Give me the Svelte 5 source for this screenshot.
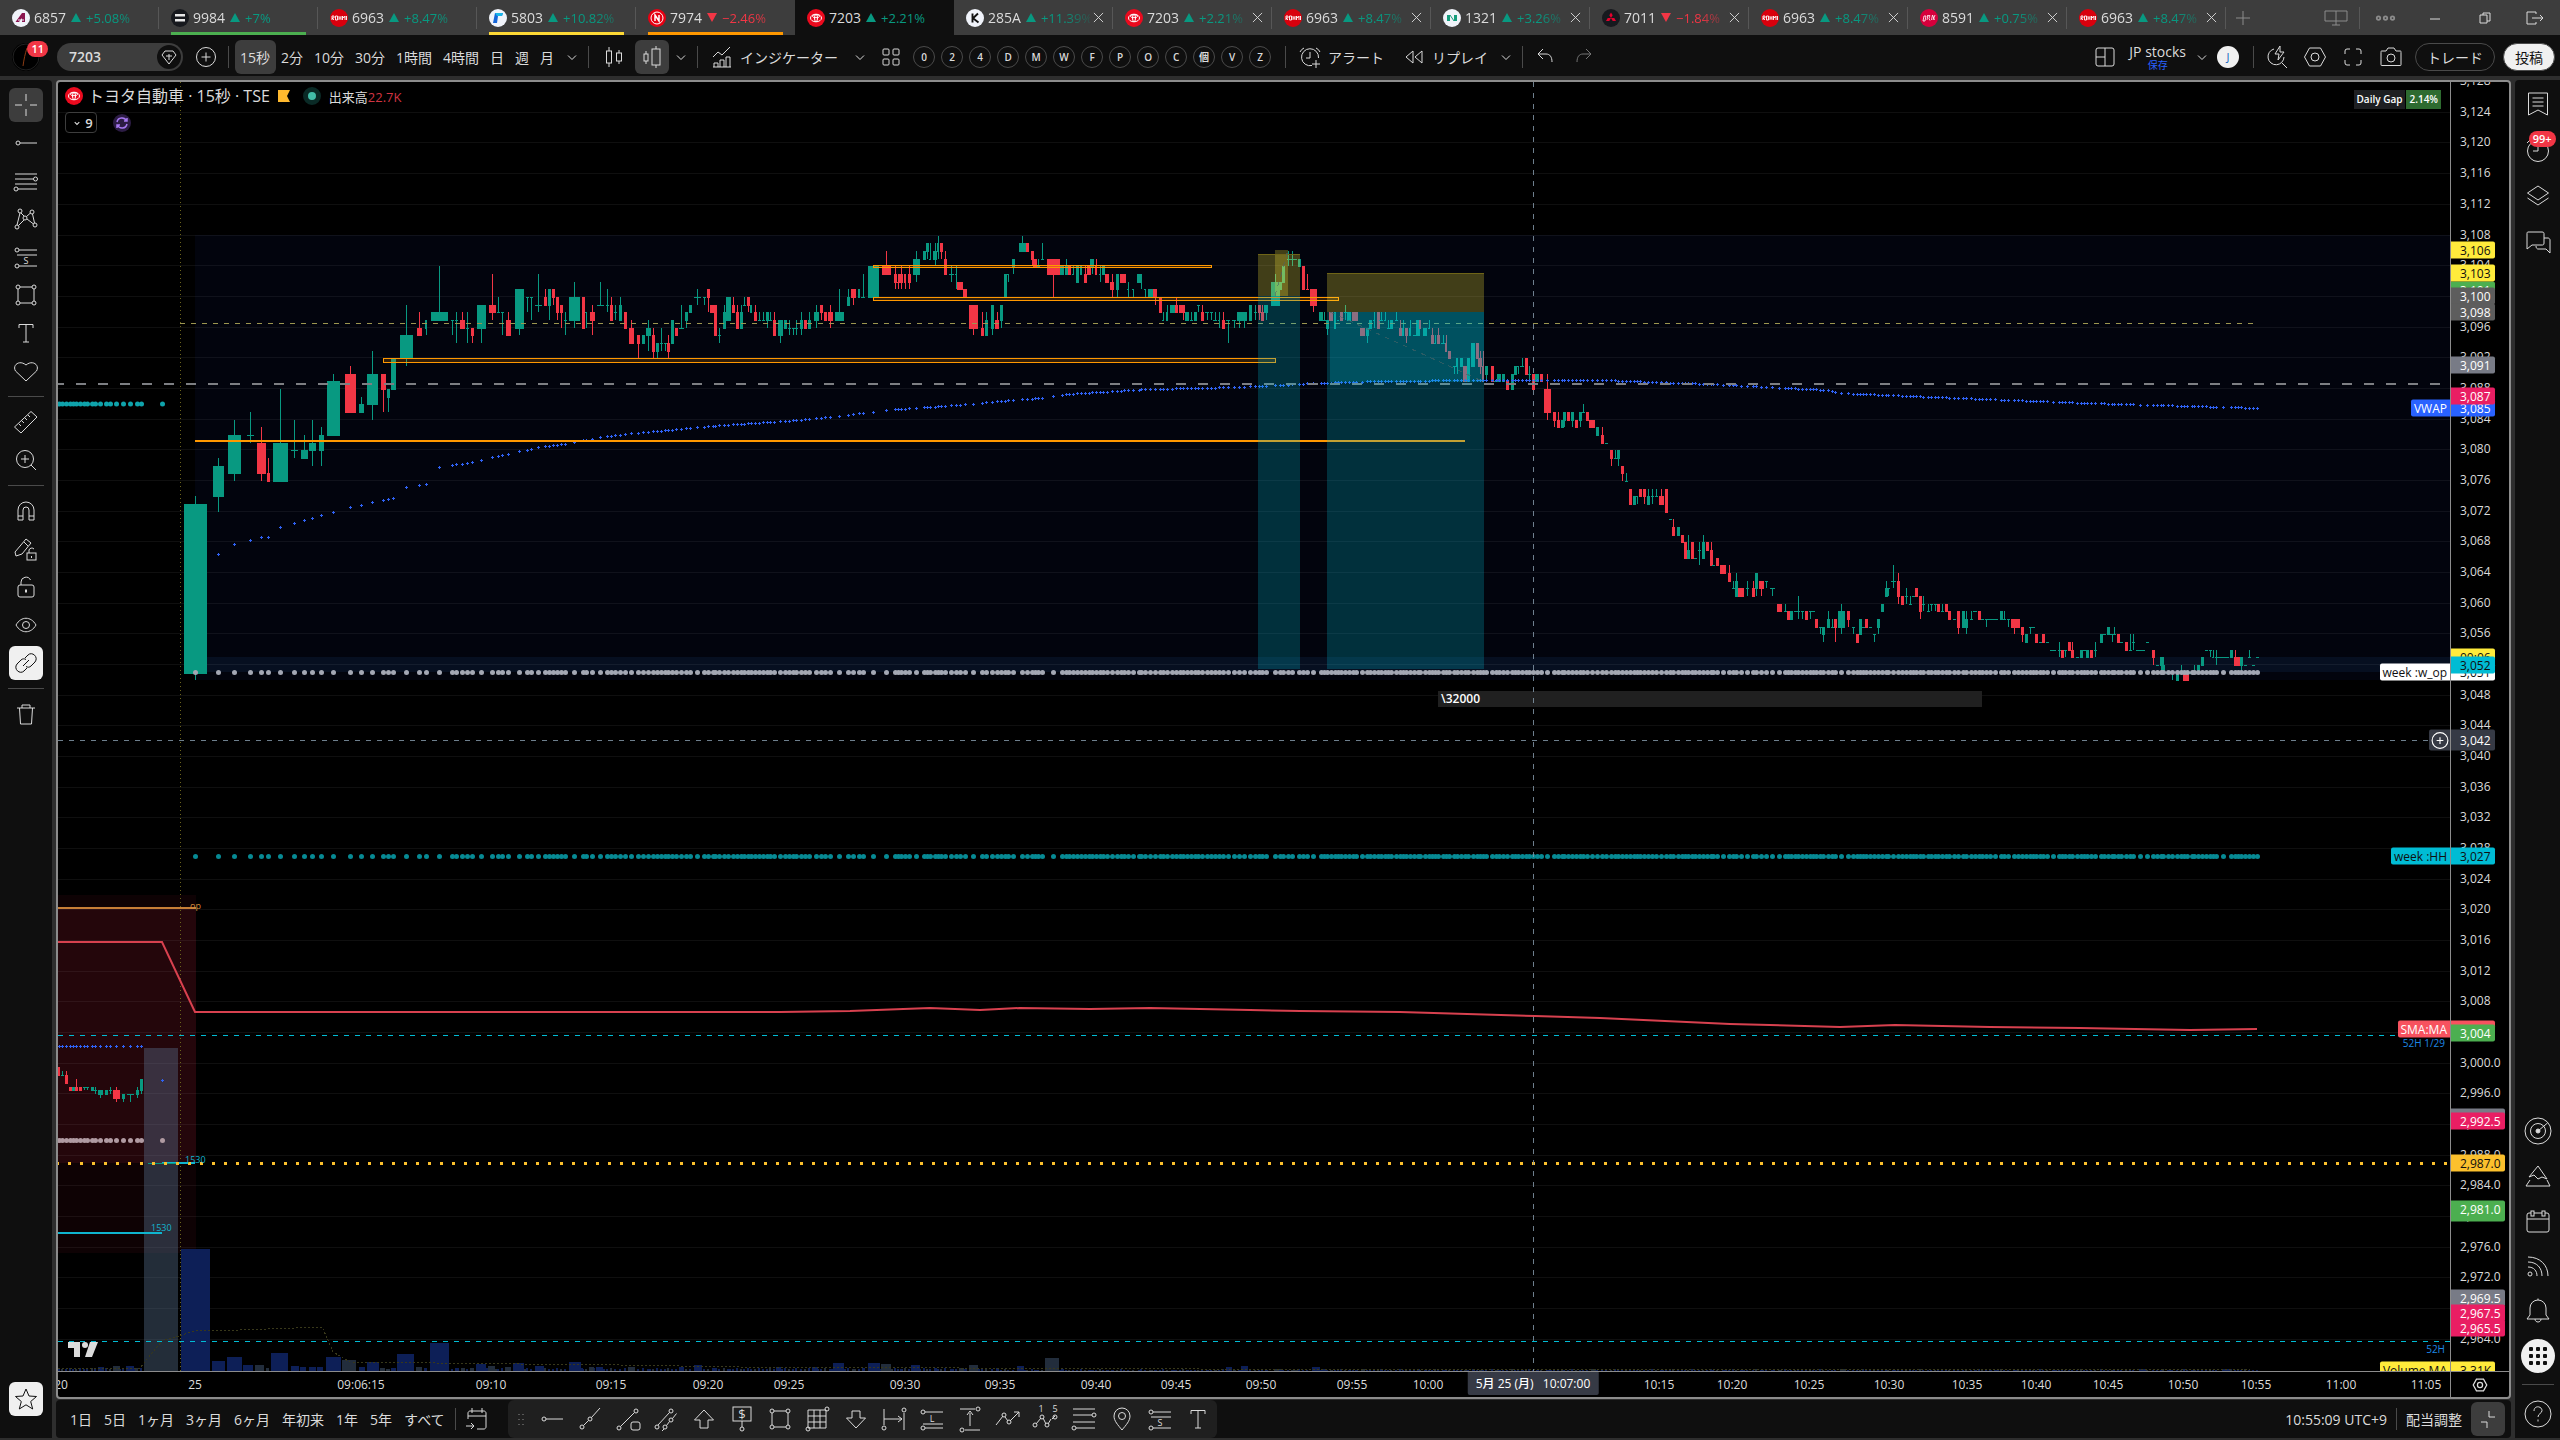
<script lang="ts">
  type Tab = { code: string; pct: string; logo: string; down?: boolean; mark?: string; active?: boolean; closable?: boolean };

  const tabs: Tab[] = [
    { code: '6857', pct: '+5.08%', logo: 'advantest' },
    { code: '9984', pct: '+7%', logo: 'softbank', mark: '#4caf50' },
    { code: '6963', pct: '+8.47%', logo: 'rohm' },
    { code: '5803', pct: '+10.82%', logo: 'fujikura', mark: '#fdd835' },
    { code: '7974', pct: '−2.46%', logo: 'nintendo', down: true, mark: '#ff9800' },
    { code: '7203', pct: '+2.21%', logo: 'toyota', active: true },
    { code: '285A', pct: '+11.39%', logo: 'kioxia', closable: true },
    { code: '7203', pct: '+2.21%', logo: 'toyota', closable: true },
    { code: '6963', pct: '+8.47%', logo: 'rohm', closable: true },
    { code: '1321', pct: '+3.26%', logo: 'nomura', closable: true },
    { code: '7011', pct: '−1.84%', logo: 'mitsubishi', down: true, closable: true },
    { code: '6963', pct: '+8.47%', logo: 'rohm', closable: true },
    { code: '8591', pct: '+0.75%', logo: 'orix', closable: true },
    { code: '6963', pct: '+8.47%', logo: 'rohm', closable: true }
  ];

  const logos: Record<string, string> = {
    advantest: '<circle cx="9" cy="9" r="9" fill="#f0f3fa"/><path d="M3.5 13 10 4h3v9h-3V9l-3 4z" fill="#8a1550"/><path d="M6 11h6" stroke="#f0f3fa"/>',
    softbank: '<circle cx="9" cy="9" r="9" fill="#17191e"/><path d="M4 5h10v2.600H4zM4 10h10v2.600H4z" fill="#e8e8e8"/>',
    rohm: '<circle cx="9" cy="9" r="9" fill="#d9000d"/><path d="M2 11V7h2v2H2l2 2M5.500 7h2v4h-2zM9 7v4M9 9h2M11 7v4M12.500 11V7l1.200 2L15 7v4M16.500 7v4" fill="none" stroke="#fff" stroke-width=".9"/>',
    fujikura: '<circle cx="9" cy="9" r="9" fill="#f0f3fa"/><path d="M6 4h8l-1 3H9l-1 7H4z" fill="#1565d8"/><path d="M6 4h8l-1 3H8z" fill="#19b5e8"/>',
    nintendo: '<circle cx="9" cy="9" r="9" fill="#e60012"/><circle cx="9" cy="9" r="6" fill="none" stroke="#fff"/><path d="M7 12V6l4 6V6" fill="none" stroke="#fff" stroke-width="1.500"/>',
    toyota: '<circle cx="9" cy="9" r="9" fill="#eb0a1e"/><g fill="none" stroke="#fff"><ellipse cx="9" cy="9" rx="5.500" ry="3.800"/><ellipse cx="9" cy="7.200" rx="3.600" ry="1.500"/><ellipse cx="9" cy="9" rx="1.500" ry="3.600"/></g>',
    kioxia: '<circle cx="9" cy="9" r="9" fill="#f0f3fa"/><path d="M6.500 4.500v9M12 4.500l-5 4.700 5.500 4.300" fill="none" stroke="#111" stroke-width="1.900"/>',
    nomura: '<circle cx="9" cy="9" r="9" fill="#f0f3fa"/><path d="M4 6h3v6H4zM11 6h3v6h-3z" fill="#149c7c"/><path d="M7 6l4 6" stroke="#149c7c"/>',
    mitsubishi: '<circle cx="9" cy="9" r="9" fill="#17191e"/><path d="M9 3.500l1.700 2.800L9 9 7.300 6.300zM9 9l-1.700 3H4l1.700-3zM9 9l1.700 3H14l-1.700-3z" fill="#e6002d"/>',
    orix: '<circle cx="9" cy="9" r="9" fill="#d6003c"/><path d="M3 12l1-5h2l-1 5zM7 11l1-5M7 7l3-.5-1 3 1 2M11.500 11l1-5M13 11l2-5M12.500 6l2 5" fill="none" stroke="#fff" stroke-width=".8"/>'
  };

  // 28 x 28 outline icons
  const icons: Record<string, string> = {
    cross: '<path d="M14 3v7M14 18v7M3 14h7M18 14h7"/>',
    hline: '<circle cx="6" cy="14" r="2"/><path d="M8 14h17"/>',
    fib: '<path d="M3 7h22M3 12h18.500M3 17h22M6 22h19"/><circle cx="23.500" cy="12" r="2"/><circle cx="4" cy="22" r="2"/>',
    pattern: '<circle cx="5" cy="22" r="2"/><circle cx="8" cy="6" r="2"/><circle cx="13" cy="13" r="2"/><circle cx="20" cy="7" r="2"/><circle cx="23" cy="20" r="2"/><path d="M5 20 8 8M9 8l3 3M6.500 20.500 12 15M14.500 11.500 18.500 8M20.500 9l2 9M15 14l6.500 5"/>',
    longpos: '<circle cx="5" cy="7" r="2"/><path d="M7 7h18M5 12h20M7 23h18"/><circle cx="5" cy="23" r="2"/><text x="14" y="21">S</text>',
    lpos: '<circle cx="5" cy="7" r="2"/><path d="M7 7h18M5 19h20M7 23h18"/><circle cx="5" cy="23" r="2"/><text x="14" y="17">L</text>',
    rect: '<circle cx="6" cy="6" r="2"/><circle cx="22" cy="6" r="2"/><circle cx="6" cy="22" r="2"/><circle cx="22" cy="22" r="2"/><path d="M8 6h12M8 22h12M6 8v12M22 8v12"/>',
    text: '<path d="M7 9V5.500h14V9M14 5.500V23M11 23h6"/>',
    heart: '<path d="M14 24 3.500 14C0 8 7.500 2.500 14 8c6.500-5.500 14 0 10.500 6z"/>',
    ruler: '<path d="M2.500 19 19 3.500l6 5.500L9 25zM7 16l2 2M10 13l2 2M13 10l2 2M16 7l2 2"/>',
    zoom: '<circle cx="13" cy="13" r="8.500"/><path d="M13 9v8M9 13h8M19 19l5 5"/>',
    magnet: '<path d="M6 23V13a8 8 0 0 1 16 0v10h-5V13a3 3 0 0 0-6 0v10zM6 19h5M17 19h5"/>',
    penlock: '<path d="M3 17 14 4l5 4-9 11-6 2zM12 7l4 4"/><rect x="15" y="18" width="9" height="7"/><path d="M17 18v-3a3 3 0 0 1 5-1M19.500 21v2"/>',
    lock: '<rect x="6" y="12" width="16" height="12" rx="2"/><path d="M9 12V9a5 5 0 0 1 9.500-2"/><path d="M14 16.500v3" stroke-width="2"/>',
    eye: '<path d="M4 14c5-9 15-9 20 0-5 9-15 9-20 0z"/><circle cx="14" cy="14" r="3.500"/>',
    link: '<path d="M13 9l3-3c4-4 11 2 7 7l-4 4c-1.500 1.500-3.500 1.500-5 .5M15 19l-3 3c-4 4-11-2-7-7l4-4c1.500-1.500 3.500-1.500 5-.5M11 17l6-6"/>',
    trash: '<path d="M5 8h18M7.500 8l1 16h11l1-16M10 8V5h8v3"/>',
    star: '<path d="M14 4l3 7 7.500.5-5.800 5 2 7.500-6.700-4.200L7.300 24l2-7.500-5.800-5L11 11z"/>',
    candles: '<path d="M9 4v4M9 20v4M19 7v3M19 18v3"/><rect x="6.500" y="8" width="5" height="12"/><rect x="16.500" y="10" width="5" height="8"/>',
    hollow: '<path d="M8 8v3M8 18v3M18 3v3M18 22v3"/><rect x="6" y="11" width="4" height="7"/><rect x="14" y="6" width="8" height="16"/>',
    chev: '<path d="M10 12.500l4 4 4-4"/>',
    indicators: '<path d="M5 14l5-5 4 3 8-8M6 24v-4h4v4M12 24v-7h4v7M18 24V14h4v10M5 24h18"/>',
    grid4: '<rect x="6" y="6" width="6" height="6" rx="1"/><rect x="16" y="6" width="6" height="6" rx="1"/><rect x="6" y="16" width="6" height="6" rx="1"/><rect x="16" y="16" width="6" height="6" rx="1"/>',
    alarm: '<path d="M22.500 15a8.500 8.500 0 1 0-6.500 7.500M14 9v6h-4M4 9a8 8 0 0 1 4-4M24 9a8 8 0 0 0-4-4M20 17v8M16 21h8"/>',
    replay: '<path d="M13 8l-7 6 7 6zM22 8l-7 6 7 6z"/>',
    undo: '<path d="M12 6l-5 5 5 5M7 11h8c4 0 6 3 6 8"/>',
    redo: '<path d="M16 6l5 5-5 5M21 11h-8c-4 0-6 3-6 8"/>',
    layout: '<rect x="5" y="5" width="18" height="18" rx="2"/><path d="M14 5v18M5 14h9"/>',
    quick: '<path d="M11 6a8 8 0 1 0 10 8M19 20l5 5M17 3l-5 8h4l-1 6 6-8h-4z"/>',
    hex: '<path d="M8.500 5h11l5 9-5 9h-11l-5-9z"/><circle cx="14" cy="14" r="4"/>',
    full: '<path d="M6 11V8a2 2 0 0 1 2-2h3M17 6h3a2 2 0 0 1 2 2v3M22 17v3a2 2 0 0 1-2 2h-3M11 22H8a2 2 0 0 1-2-2v-3"/>',
    camera: '<path d="M5 8h4l2-3h6l2 3h4c1 0 1 0 1 1.500V21c0 1.500 0 1.500-1 1.500H5c-1 0-1 0-1-1.500V9.500C4 8 4 8 5 8z"/><circle cx="14" cy="15" r="4"/>',
    plusCircle: '<circle cx="14" cy="14" r="9.500"/><path d="M14 9.500v9M9.500 14h9"/>',
    watch: '<path d="M4.500 3h19v22l-9.500-5-9.500 5zM8.500 8h11M8.500 12h11M8.500 16h11"/>',
    clock: '<circle cx="14" cy="15" r="10.500"/><path d="M14 9v6H9M3 7l4-4"/>',
    layers: '<path d="M14 4l10.500 7L14 18 3.500 11zM3.500 16 14 23l10.500-7"/>',
    chat: '<path d="M4 4h14c2 0 2 1 2 2v9c0 2-1 2-2 2H8l-5 4V6c0-1 0-2 1-2zM20 10h4c1 0 2 1 2 2v13l-4-4h-8c-1 0-2-1-2-3"/>',
    radar: '<circle cx="14" cy="14" r="13"/><circle cx="14" cy="14" r="7.500"/><path d="M14 14l9.500-8"/><circle cx="14" cy="14" r="2" fill="currentColor"/>',
    mountain: '<path d="M14 4 5 15l5-2 4 4 4-2 5 2zM6 18l-4 6h24l-3-6"/>',
    calendar: '<rect x="3" y="6" width="22" height="19" rx="2"/><path d="M3 12h22"/><rect x="7" y="4" width="3" height="5" fill="#0f0f0f"/><rect x="18" y="4" width="3" height="5" fill="#0f0f0f"/>',
    rss: '<circle cx="6" cy="22" r="2"/><path d="M4 15c6 0 9 4 9 9M4 10c9 0 14 6 14 14M4 5c12 0 20 8 20 19"/>',
    bell: '<path d="M3 22l3-4v-7a8 8 0 0 1 16 0v7l3 4zM11 22c0 4 6 4 6 0M14 3V1.500"/>',
    help: '<circle cx="14" cy="14" r="13"/><path d="M10 11c0-6 8-5 8-.5 0 3-4 3-4 6.500"/><path d="M14 19.500v2"/>',
    goto: '<path d="M6 14V8c0-1 1-2 2-2h14c1 0 2 1 2 2v14c0 1-1 2-2 2h-7M6 11h18M10 3v5M20 3v5M4 21h8M9 18l3 3-3 3"/>',
    trend: '<circle cx="6" cy="22" r="2"/><circle cx="14" cy="14" r="2"/><path d="M7.500 20.500l5-5M15.500 12.500 24 3"/>',
    ray: '<circle cx="5" cy="23" r="2"/><circle cx="22" cy="6" r="2"/><path d="M6.500 21.500l14-14"/><rect x="17" y="17" width="9" height="8" rx="2"/>',
    channel: '<circle cx="5" cy="22" r="2"/><circle cx="19" cy="6" r="2"/><circle cx="19" cy="15" r="2"/><circle cx="13" cy="22" r="2"/><path d="M6 20 17.500 7.500M14.500 20.500l3-4M20.500 13.500l4-5M10 26l2-2"/>',
    up: '<path d="M14 5 4.500 15H10v8h8v-8h5.500z"/>',
    down: '<path d="M14 23l9.500-10H18V6h-8v7H4.500z"/>',
    price: '<rect x="5" y="2" width="18" height="14"/><path d="M14 16v6"/><circle cx="14" cy="24" r="2"/><text x="14" y="14" style="font-size:13px">$</text>',
    gridbox: '<path d="M4 5h18v18H4zM10 5v18M16 5v18M4 11h18M4 17h18"/><circle cx="23" cy="4" r="2"/><circle cx="4" cy="24" r="2"/>',
    dateRange: '<path d="M4 4v16M24 8v17M4 14h18M18 11l4 3-4 3"/><circle cx="4" cy="23" r="2"/><circle cx="24" cy="5" r="2"/>',
    priceRange: '<path d="M4 4h15M9 25h15M14 21V8M11 10l3-4 3 4"/><circle cx="22" cy="4" r="2"/><circle cx="6" cy="25" r="2"/>',
    path: '<path d="M2 20l7-9M11 12l3 4M16 16l9-9M20 7h5v5"/><circle cx="10" cy="10" r="2"/><circle cx="15" cy="17" r="2"/>',
    elliott: '<path d="M4 19l5-6M11 13l3 6M16 19l3-5M20 14l3-3"/><circle cx="3" cy="20" r="2"/><circle cx="10" cy="12" r="2"/><circle cx="15" cy="20" r="2"/><circle cx="23" cy="12" r="2"/><text x="9" y="7">1</text><text x="23" y="7">5</text>',
    fib2: '<path d="M3 4h22M3 10h19M3 17h22M6 23h19"/><circle cx="24" cy="10" r="2"/><circle cx="4" cy="23" r="2"/>',
    pin: '<path d="M14 25c-4-5-8-9-8-14a8 8 0 0 1 16 0c0 5-4 9-8 14z"/><circle cx="14" cy="11" r="3.500"/>',
    collapse: '<path d="M15 6v6h6M7 17h6v6"/>'
  };

  const timeframes = ['15秒', '2分', '10分', '30分', '1時間', '4時間', '日', '週', '月'];
  const favorites = ['0', '2', '4', 'D', 'M', 'W', 'F', 'P', 'O', 'C', '個', 'V', 'Z'];
  const leftTools = ['cross', 'hline', 'fib', 'pattern', 'longpos', 'rect', 'text', 'heart', '-', 'ruler', 'zoom', '-', 'magnet', 'penlock', 'lock', 'eye', 'link', '-', 'trash'];
  const rightTop = ['watch', 'clock', 'layers', 'chat'];
  const rightBottom = ['radar', 'mountain', 'calendar', 'rss', 'bell'];
  const drawTools = ['hline', 'trend', 'ray', 'channel', 'up', 'price', 'rect', 'gridbox', 'down', 'dateRange', 'lpos', 'priceRange', 'path', 'elliott', 'fib2', 'pin', 'longpos', 'text'];
  const ranges = ['1日', '5日', '1ヶ月', '3ヶ月', '6ヶ月', '年初来', '1年', '5年', 'すべて'];

  // plot area
  const L = 58;
  const T = 82;
  const W = 2393;
  const H = 1289;
  const y = (price: number) => 235.5 + (3108 - price) * 7.667;
  const topPct = (v: number) => `${((v - T) / H) * 100}%`;
  const leftPct = (v: number) => `${((v - L) / W) * 100}%`;

  // bar: x, width (negative = falling), body top, body bottom, high, low; prices are offsets from 3000
  const segments = [
    {
      start: 0,
      step: 1 / 3,
      bars: `177 -6 -.5 -1.5;187 10 -1.5 -1.5 -1 -1.5;199 -9 -1.5 -2.5 -1 -2.5;209 -9 -3 -3.5;220 9 -3 -3.5;229 -9 -3 -3.5 -2 -3.5;241 -9 -3 -3.5;252 8 -3 -3 -3 -3.5;262 8 -3 -3 -3 -3.5;275 9 -3 -3.5;286 8 -3.5 -3.5 -3 -4;301 15 -3.5 -4 -3.5 -4.5;319 8 -3.5 -4;331 8 -3.5 -3.5 -3 -4;349 -21 -3.5 -4.5 -3 -5;370 9 -4 -4.5 -4 -5;389 20 -4 -4 -4 -5;412 8 -3.5 -4 -3 -4.5;424 9 -2 -3.5 -2 -4`
    },
    {
      start: 170,
      step: 0.408,
      bars: `62 57 73 51 74 50;118 27 78 74 79 72;158 32 82 77 84 76;195 18 82 82 85 81;222 -22 81 77 83 76;241 -7 77 76 79 76;270 37 81 76 88 76;305 18 80 80 84 79;329 17 80 79 82 79;349 17 81 80 84 78;371 12 82 80 83 78;400 31 89 82 90 82;442 -27 90 85 91 85;469 12 86 85 87 85;496 27 90 86 93 84;523 -12 90 88 90 85;535 7 88 87 88 85;547 13 92 88;579 32 95 92 99 91;611 -12 96 95 98 95;628 6 97 96 97 95;660 42 98 97 104 97;692 8 97 97 97 95;702 8 97 97 98 94;716 -13 97 96 98 96;729 8 96 96 98 94;741 -8 96 95 96 94;763 22 99 96 99 94;790 -17 99 98 103 97;805 8 98 98 100 98;814 8 98 98 98 95;829 -12 97 95 98 95;856 22 101 96 101 95;876 8 100 100 100 98;885 8 100 100 100 97;902 17 99 99 103 98;920 -8 100 99 101 99;930 7 101 99 101 97;939 -7 101 100 101 99;949 -7 100 98 100 97;959 -8 99 98 99 96;969 8 97 97 98 95;991 26 100 97 102 96;1013 -8 100 96;1020 6 98 98 98 96;1035 -12 98 97 99 95;1054 17 99 99 102 99;1072 8 99 99 101 98;1081 -7 99 97 100 97;1091 7 98 98 99 97;1103 7 99 97 100 97;1116 -8 98 96;1131 -12 96 94 97 94;1148 -7 95 94 95 92;1160 8 95 94;1172 12 96 95 97 93;1184 -7 95 93 96 92;1194 7 94 93 94 92;1204 7 94 94 96 93;1214 7 94 94 94 93;1221 -7 94 93 95 92;1231 8 97 94;1241 -8 96 95;1253 12 96 96 99 96;1265 7 98 97 98 96;1275 7 99 98;1292 17 100 100 101 99;1309 7 100 100 100 99;1319 -7 101 100 101 98;1331 -15 99 98;1336 -7 99 95;1346 7 95 95 96 94;1358 7 98 96 99 96;1367 12 100 97;1380 -7 99 98 100 98;1390 -7 98 96 99 96;1399 8 98 96 99 96;1408 7 99 99 100 99;1417 -7 100 99 100 98;1424 6 99 98;1434 -7 98 97 99 97;1444 7 97 97 98 97;1454 7 97 97 98 97;1464 8 98 97 98 96;1471 7 97 97 98 97;1481 -7 97 95 98 95;1496 12 97 95 97 94;1508 7 97 96;1518 7 96 96 97 95;1527 7 96 96 96 95;1535 7 96 96 97 95`
    },
    {
      start: 800,
      step: 0.4847,
      bars: `3 7 97 96 98 95;11 -7 97 96;19 6 97 96 98 96;32 10 98 97 99 96;44 -6 99 98 99 97;51 -6 98 97;61 -10 98 97 99 96;81 19 98 97 101 97;98 6 100 99 101 99;110 -10 101 100 101 99;121 5 101 100;131 9 100 100 103 100;151 23 104 100;178 -18 104 103 106 103;195 -7 103 102 104 101;202 -3 102 102 103 101;209 -8 103 102 104 101;217 -5 103 102 103 101;224 -6 103 102 104 101;240 15 105 103 106 102;255 6 106 105;263 6 107 106 107 105;269 3 105 105 107 105;278 8 106 105 107 104;284 5 107 106 108 105;291 -6 107 106 107 105;299 -6 105 103 106 103;311 10 103 103 104 102;321 4 103 103 104 101;330 -13 102 101;341 -8 101 100;357 -18 99 96 99 95;375 -6 96 95 98 95;384 6 97 95 98 95;397 6 99 96 99 95;406 -8 97 96 98 96;414 6 99 97 99 96;422 6 103 100;430 5 103 103 103 102;440 7 105 104 105 103;457 14 107 106 108 106;468 -6 107 106;478 -6 106 105 106 104;485 -8 105 104;492 6 104 104 105 104;500 6 105 105 107 105;521 -26 105 103 105 100;541 8 104 103;548 6 104 103 105 103;556 -6 104 103;564 5 103 103 104 103;572 7 104 102;580 5 104 103;587 -6 103 102 104 102;596 -8 104 103;603 8 105 104 105 103;611 -5 104 103 105 103;618 5 103 103 104 102;625 6 104 103;633 -8 103 102;643 -8 102 101 103 100;653 6 103 101 103 100;662 -6 103 102;669 -7 103 102;677 5 101 101 102 100;686 5 101 101 101 100;699 10 103 102;704 3 102 102 103 101;711 5 101 101 101 100;722 10 101 100;733 -8 101 100 101 99;742 -6 100 98;748 4 97 97 98 97;757 5 98 97 99 97;767 10 99 98;775 -7 99 98 100 98;783 -6 99 98;790 -6 99 98 99 97;798 8 98 97;806 6 97 97 98 97;814 6 98 97;822 7 99 99 99 98;830 -6 98 97 99 97;840 8 98 98 98 97;848 6 98 98 98 97;856 8 97 97 98 97;864 5 97 97 98 96;872 -7 97 96 98 96;884 8 97 97 97 94;895 8 97 97 97 96;905 8 98 97 98 96;917 13 98 97 98 96;929 7 99 97;938 6 98 98 99 97;946 -6 99 98 99 97;953 -6 98 97 99 97;962 8 99 98 99 97;980 18 102 99 103 99;990 8 102 101;996 7 104 102;1006 5 105 105 106 104;1016 18 105 105 106 104;1029 7 105 104;1037 -6 104 101;1045 -7 101 101 103 101;1059 -15 101 99 101 98;1074 8 98 97 98 97;1081 8 97 97 98 97;1088 6 97 96 97 95;1096 -8 98 97;1103 5 98 96;1110 5 97 97;1117 -6 98 97;1125 6 98 98 99 97;1132 8 98 97;1140 -7 98 97;1147 -8 98 97;1159 -10 96 95;1169 6 96 95 96 94;1177 6 97 96;1184 3 97 97 98 96;1192 -7 98 96;1198 8 97 97 98 97;1206 3 97 97 98 97;1213 7 96 96 97 96;1220 6 97 96;1229 6 97 97 98 97;1237 -6 96 95 97 95;1244 4 96 95 97 95;1251 -6 96 95 96 94;1258 5 96 95 97 95;1266 6 95 95;1275 8 97 95;1280 -4 97 96;1289 8 96 95;1297 4 96 96 97 96;1304 -6 95 94 96 94;1311 4 94 94 95 94;1317 -6 95 94 96 94;1326 8 94 94 95 94;1333 -5 94 93 95 93;1340 -6 93 92;1349 6 91 91 91 90;1356 5 92 91 92 90;1363 6 92 91;1371 -10 91 89;1378 6 92 89;1388 8 94 91;1396 -7 94 92;1403 -8 92 91 93 90;1410 -4 91 89 93 89;1416 6 91 90 91 89;1427 -7 91 89;1435 8 89 89;1442 8 90 89;1450 6 90 89;1458 -6 89 88;1468 6 90 88;1475 6 91 90;1482 4 91 91 91 90;1490 8 91 91 92 91;1497 -6 92 90;1504 6 90 90 91 89;1513 -6 90 88;1521 8 90 89;1528 -7 90 89`
    },
    {
      start: 1500,
      step: 0.5102,
      bars: `93 -14 88 85 90 84;105 -6 85 84 85 83;113 -6 84 83 85 83;121 6 84 83;126 6 85 84 85 83;134 -6 85 84;142 6 85 84 85 83;148 -6 84 83;156 6 85 84 85 83;162 6 85 85 86 85;170 -6 85 84;180 -12 84 83;191 6 83 82;199 -6 82 81 83 81;207 6 81 81;217 -6 80 79 80 78;226 5 79 79 80 79;232 6 80 79 80 78;240 -6 78 77 78 76;246 6 76 76 77 76;254 -6 75 73;262 6 74 73;268 4 74 74 74 73;275 -6 75 74;283 -6 75 74 75 73;291 6 74 73 75 73;297 6 74 74 75 73;305 6 74 74 75 74;315 -10 74 73 75 73;326 -6 75 72;334 6 71 71;340 -6 70 69 71 69;348 6 70 69;356 -6 69 68;362 -6 68 66;369 6 67 66 69 66;377 -6 68 66;383 6 66 66;391 6 67 67 68 65;397 6 68 66 69 66;405 -6 68 67;413 -6 67 65 68 65;418 5 65 65;426 -6 66 65;437 -12 65 64;448 -6 64 63 65 63;456 6 62 62 63 62;462 6 63 61 64 61;472 -12 62 61;485 6 62 62 63 61;495 -6 62 61 63 61;501 6 64 62 64 61;511 -10 63 62 63 61;522 6 63 63 63 62;533 10 62 62 62 61;546 -10 60 59;558 6 59 59 60 59;564 -5 59 58;571 6 59 58;578 6 59 59;585 6 59 59 61 58;592 6 59 59 59 58;599 -6 59 58;607 6 59 59 59 58;614 6 59 59;620 -6 58 57;628 6 57 57 57 56;634 6 57 56 57 55;642 6 58 57 59 57;650 6 57 57 58 57;656 -6 58 57 58 55;669 14 59 57 60 56;683 -6 59 58 59 57;691 6 57 57 57 56;699 -6 56 55;705 6 58 56;712 6 57 57;718 -6 58 57;726 6 57 57;734 6 56 56 56 55;740 6 58 57 58 56;748 6 60 59;756 6 62 61 63 61;761 6 62 62 62 61;771 10 63 63 65 62;781 -6 63 61 64 60;787 -6 61 60;795 6 61 61 62 60;803 6 60 60 61 60;809 6 61 61;816 -6 62 61;824 -6 61 59 61 58;830 6 60 60 61 59;838 6 59 59 60 59;844 6 60 60 60 59;852 6 60 60 60 59;859 -6 60 59;867 5 59 59 60 59;875 -6 60 59;881 -6 59 58;889 6 58 58;897 -6 59 57 59 56;907 6 59 57;913 6 58 57 59 56;924 6 58 58 59 58;931 8 59 59;938 -6 59 58;945 6 58 58;952 6 58 58 58 57;960 8 58 58;970 12 58 58;981 6 59 58;987 6 58 58 59 58;995 6 58 58 58 57;1008 -14 58 57 58 56;1016 -6 58 57;1024 -6 57 56 57 55;1030 6 56 55;1038 6 57 57 57 56;1044 6 57 57;1051 -6 56 55;1059 5 55 55;1065 -6 56 55;1073 6 55 55;1084 12 54 54;1095 6 54 54 55 53;1101 -6 54 53;1108 5 54 54 54 53;1116 -6 55 54;1122 -6 54 53 55 53;1130 6 53 53;1138 6 54 53;1144 6 54 54;1151 6 54 53;1159 -6 54 53;1167 6 54 54 55 53;1177 6 56 55;1184 6 56 56;1191 6 57 56;1199 8 56 56 56 55;1204 6 56 56 57 56;1212 -6 56 55;1218 6 55 55;1226 -6 55 54;1234 6 54 54 56 54;1240 6 55 55 56 54;1254 18 54 54;1269 6 55 55;1279 -6 54 53 54 52;1287 6 52 52;1295 6 53 52 53 51;1300 6 52 51 53 51;1309 10 51 51;1318 6 51 51 51 50;1326 6 51 50;1334 6 51 51 52 51;1340 -6 51 50;1347 -5 51 50;1356 12 51 51;1361 3 51 51 52 51;1369 6 52 51;1375 6 53 52;1383 6 54 54;1391 6 54 54 54 53;1397 4 53 53 54 53;1404 6 53 53 54 52;1418 22 53 53;1432 6 54 53;1440 -6 53 52 54 52;1447 -6 53 52;1453 6 53 52 53 51;1461 6 52 52;1469 6 53 53 54 53;1475 6 52 52;1483 6 53 53`
    }
  ];

  const candles = segments.flatMap((seg) =>
    seg.bars.split(';').map((row) => {
      const [bx, bw, top, bottom, high = top, low = bottom] = row.split(' ').map(Number);
      const width = Math.max(2, Math.round(Math.abs(bw) * seg.step));
      const x = Math.round(seg.start + bx * seg.step);
      const up = bw > 0;
      return { x, width, up, t: Math.round(y(3000 + top)), b: Math.round(y(3000 + bottom)) + 1, hi: Math.round(y(3000 + high)), lo: Math.round(y(3000 + low)) };
    })
  );
  const today = candles.filter((c) => c.x > 190);
  const previous = candles.filter((c) => c.x < 190);
  const dotXs = today.map((c) => c.x);
  const prevXs = [...previous.map((c) => c.x), 162];

  const vwapKnots = [
    [195, 566], [218, 554], [234, 544], [249, 540], [260, 537], [268, 537], [280, 527], [333, 512], [350, 507], [383, 500], [393, 498], [406, 487], [426, 484], [439, 467],
    [472, 462], [492, 457], [508, 454], [538, 447], [565, 444], [600, 437], [632, 433], [681, 429], [697, 427], [781, 421], [800, 420], [839, 416],
    [886, 410], [945, 406], [1013, 400], [1042, 398], [1066, 394], [1148, 389], [1202, 388], [1262, 386], [1314, 383], [1382, 381], [1479, 380],
    [1602, 380], [1709, 384], [1827, 390], [1841, 393], [1934, 397], [2087, 403], [2260, 408]
  ];
  function vwapAt(x: number) {
    const i = Math.max(1, vwapKnots.findIndex((k) => k[0] >= x));
    const [x0, y0] = vwapKnots[i - 1];
    const [x1, y1] = vwapKnots[i];
    return Math.round(y0 + ((x - x0) / (x1 - x0)) * (y1 - y0));
  }
  const plus = (px: number, py: number) => `M${px - 1} ${py + 0.5}h3M${px + 0.5} ${py - 1}v3`;
  const vwapPath = dotXs.slice(1).map((x) => plus(x, vwapAt(x))).join('') + previous.map((c) => plus(c.x, 1046)).join('') + plus(162, 1080);

  const sma = '58,942 162,942 195,1012 780,1012 850,1011 930,1008 980,1010 1020,1008 1090,1009 1150,1008 1250,1010 1300,1011 1400,1012 1535,1016 1600,1018 1665,1021 1730,1024 1840,1027 1895,1025 1990,1027 2080,1028 2190,1030 2257,1029';
  const volumeMa = '58,1369 140,1368 148,1358 162,1341 195,1331 240,1330 322,1327 328,1340 333,1352 350,1362 520,1364 620,1365 800,1368 900,1367 960,1368 1200,1369 2250,1369';

  // x, width, height, muted
  const volumes: [number, number, number, number?][] = [
    [181, 29, 122], [212, 13, 10], [227, 15, 14], [243, 10, 6], [255, 9, 6, 1], [266, 3, 3, 1], [271, 17, 18], [291, 8, 5], [300, 6, 4], [309, 7, 4],
    [317, 6, 4], [326, 15, 14], [342, 14, 11, 1], [359, 6, 4], [367, 12, 9], [380, 5, 3, 1], [386, 4, 2, 1], [391, 5, 3], [397, 17, 17], [416, 6, 4, 1],
    [424, 3, 3], [430, 19, 28], [455, 4, 3], [461, 4, 3, 1], [470, 4, 3, 1], [476, 10, 7], [488, 7, 5, 1], [505, 6, 4, 1], [513, 11, 8], [535, 9, 5],
    [569, 12, 9], [589, 5, 4, 1], [596, 7, 4], [628, 7, 4, 1], [679, 5, 4], [694, 8, 6], [776, 5, 4], [812, 6, 4], [833, 11, 8], [868, 12, 8],
    [881, 10, 7, 1], [911, 9, 6], [969, 9, 6, 1], [1017, 7, 5], [1045, 14, 13, 1], [1226, 6, 4], [1241, 7, 5], [1312, 8, 4], [98, 6, 4], [113, 7, 5, 1], [126, 8, 5], [135, 3, 3, 1]
  ];
  const smallVolumes = candles
    .filter((c) => c.x > 440 || c.x < 145)
    .map((c, i) => ({ x: c.x - 1, w: Math.max(2, c.width - 1), h: c.x > 1000 ? 1 + ((i * 7) % 5 === 0 ? 1 : 0) : 2 + ((i * 7) % 3 === 0 ? 1 : 0), muted: i % 4 === 1 }));

  const ticks = Array.from({ length: 42 }, (_, i) => 3128 - i * 4);
  const tickText = (p: number) => (p > 3000 ? p.toLocaleString('en-US') : p.toLocaleString('en-US') + '.0');

  const priceTags = [
    { at: 250, text: '3,106', tone: 'yellow' },
    { at: 290, text: '3,101', tone: 'green' },
    { at: 273, text: '3,103', tone: 'yellow' },
    { at: 296, text: '3,100', tone: 'gray' },
    { at: 312, text: '3,098', tone: 'gray' },
    { at: 365, text: '3,091', tone: 'steel' },
    { at: 408, text: '3,085', tone: 'blue' },
    { at: 396, text: '3,087', tone: 'pink' },
    { at: 657, text: '00:06', tone: 'yellow' },
    { at: 672, text: '3,051', tone: 'white' },
    { at: 665, text: '3,052', tone: 'cyan' },
    { at: 740, text: '3,042', tone: 'slate' },
    { at: 856, text: '3,027', tone: 'cyan' },
    { at: 1029, text: '3,005', tone: 'red' },
    { at: 1033, text: '3,004', tone: 'green' },
    { at: 1117, text: '2,993.0', tone: 'steel' },
    { at: 1121, text: '2,992.5', tone: 'pink' },
    { at: 1163, text: '2,987.0', tone: 'amber' },
    { at: 1211, text: '2,981.0', tone: 'green tall' },
    { at: 1298, text: '2,969.5', tone: 'steel' },
    { at: 1313, text: '2,967.5', tone: 'pink' },
    { at: 1328, text: '2,965.5', tone: 'pink' },
    { at: 1370, text: '3.31K', tone: 'yellow' }
  ];
  const lineTags = [
    { at: 408, text: 'VWAP', tone: 'blue' },
    { at: 672, text: 'week :w_op', tone: 'white' },
    { at: 856, text: 'week :HH', tone: 'cyan' },
    { at: 1029, text: 'SMA:MA', tone: 'red' },
    { at: 1043, text: '52H 1/29', tone: 'note' },
    { at: 1349, text: '52H', tone: 'note' },
    { at: 1370, text: 'Volume MA', tone: 'yellow' }
  ];
  const times: [number, string][] = [
    [61, '20'], [195, '25'], [361, '09:06:15'], [491, '09:10'], [611, '09:15'], [708, '09:20'], [789, '09:25'], [905, '09:30'], [1000, '09:35'],
    [1096, '09:40'], [1176, '09:45'], [1261, '09:50'], [1352, '09:55'], [1428, '10:00'], [1659, '10:15'], [1732, '10:20'], [1809, '10:25'],
    [1889, '10:30'], [1967, '10:35'], [2036, '10:40'], [2108, '10:45'], [2183, '10:50'], [2256, '10:55'], [2341, '11:00'], [2426, '11:05']
  ];

  let activeFrame = '15秒';
  let symbol = '7203';
</script>

{#snippet icon(name: string)}
  <svg class="icon" viewBox="0 0 28 28" aria-hidden="true">{@html icons[name]}</svg>
{/snippet}

{#snippet logo(name: string)}
  <svg class="logo" viewBox="0 0 18 18" aria-hidden="true">{@html logos[name]}</svg>
{/snippet}

<div class="app">
  <nav class="tabs">
    {#each tabs as tab, i}
      <div class="tab" class:active={tab.active} class:bare={tab.active || tabs[i + 1]?.active}>
        <a class="quote" class:short={tab.closable} href="#{tab.code}">
          {@render logo(tab.logo)}
          <span class="code">{tab.code}</span>
          <span class="arrow" class:down={tab.down}></span>
          <span class="pct" class:down={tab.down}>{tab.pct}</span>
        </a>
        {#if tab.closable}
          <button class="close" aria-label="閉じる"><svg viewBox="0 0 12 12"><path d="M1 1l10 10M11 1 1 11" /></svg></button>
        {/if}
        {#if tab.mark}<span class="mark" style="background:{tab.mark}"></span>{/if}
      </div>
    {/each}
    <button class="win dim add" aria-label="新しいタブ"><svg viewBox="0 0 16 16"><path d="M8 1v14M1 8h14" /></svg></button>
    <div class="window-tools">
      <button class="win dim monitor" aria-label="ディスプレイ"><svg viewBox="0 0 24 16"><path d="M1 1h22v10H1zM12 1v14M8 15h8" /></svg></button>
      <button class="win dim more" aria-label="メニュー"><svg viewBox="0 0 24 16"><circle cx="4" cy="8" r="2" /><circle cx="12" cy="8" r="2" /><circle cx="20" cy="8" r="2" /></svg></button>
      <button class="win" aria-label="最小化"><svg viewBox="0 0 16 16"><path d="M3 9h10" /></svg></button>
      <button class="win" aria-label="元に戻す"><svg viewBox="0 0 16 16"><path d="M3 5h7v8H3zM6 5V3h7v8h-3" /></svg></button>
      <button class="win" aria-label="終了"><svg viewBox="0 0 18 16"><path d="M10 4V2H1v12h9v-2M6 8h11M14 5l3 3-3 3" /></svg></button>
    </div>
  </nav>

  <header class="toolbar">
    <button class="avatar" aria-label="アカウント">
      <svg viewBox="0 0 28 28"><circle cx="14" cy="14" r="14" fill="#000" /><path d="M11 23c1-7 2-12 4-18" stroke="#8a3c14" fill="none" /><circle cx="14" cy="14" r="13" fill="none" stroke="#222" /></svg>
      <span class="badge">11</span>
    </button>
    <div class="search">
      <input aria-label="シンボル検索" bind:value={symbol} />
      <svg viewBox="0 0 24 24"><circle cx="12" cy="12" r="12" fill="#0f0f0f" /><path d="M8 6h8l3 4-7 9-7-9zM12 9v6M9 11h6" fill="none" stroke="#dbdbdb" /></svg>
    </div>
    <button class="tool" aria-label="比較">{@render icon('plusCircle')}</button>
    <span class="sep first"></span>
    {#each timeframes as frame}
      <button class="frame" class:on={frame === activeFrame} on:click={() => (activeFrame = frame)}>{frame}</button>
    {/each}
    <button class="tool chevron" aria-label="時間足">{@render icon('chev')}</button>
    <span class="sep"></span>
    <button class="tool wide" aria-label="ローソク足">{@render icon('candles')}</button>
    <button class="tool on" aria-label="中空ローソク足">{@render icon('hollow')}</button>
    <button class="tool chevron" aria-label="チャートタイプ">{@render icon('chev')}</button>
    <span class="sep"></span>
    <button class="tool labelled">{@render icon('indicators')}インジケーター</button>
    <button class="tool chevron indent" aria-label="お気に入り">{@render icon('chev')}</button>
    <button class="tool" aria-label="テンプレート">{@render icon('grid4')}</button>
    <div class="favorites">
      {#each favorites as fav}<button>{fav}</button>{/each}
    </div>
    <span class="sep"></span>
    <button class="tool labelled">{@render icon('alarm')}アラート</button>
    <button class="tool labelled">{@render icon('replay')}リプレイ</button>
    <button class="tool chevron" aria-label="リプレイ設定">{@render icon('chev')}</button>
    <span class="sep"></span>
    <button class="tool" aria-label="元に戻す">{@render icon('undo')}</button>
    <button class="tool faded" aria-label="やり直す">{@render icon('redo')}</button>
    <div class="right">
      <button class="tool" aria-label="レイアウト">{@render icon('layout')}</button>
      <button class="layout-name">JP stocks<small>保存</small></button>
      <button class="tool chevron" aria-label="レイアウト一覧">{@render icon('chev')}</button>
      <button class="initial">J</button>
      <span class="sep"></span>
      <button class="tool big" aria-label="クイック検索">{@render icon('quick')}</button>
      <button class="tool big" aria-label="設定">{@render icon('hex')}</button>
      <button class="tool big" aria-label="全画面">{@render icon('full')}</button>
      <button class="tool big" aria-label="スナップショット">{@render icon('camera')}</button>
      <button class="pill">トレード</button>
      <button class="pill solid">投稿</button>
    </div>
  </header>

  <div class="body">
    <aside class="left">
      {#each leftTools as name}
        {#if name === '-'}
          <hr />
        {:else}
          <button class="side" class:on={name === 'cross'} class:lit={name === 'link'} aria-label={name}>{@render icon(name)}</button>
        {/if}
      {/each}
      <button class="side lit last" aria-label="star">{@render icon('star')}</button>
    </aside>

    <main>
      <section class="chart">
        <div class="plot">
          <svg class="canvas" viewBox="{L} {T} {W} {H}" preserveAspectRatio="none" shape-rendering="crispEdges">
            <rect x="195" y="235" width="2256" height="445" fill="#02040d" />
            <rect x="195" y="657" width="2256" height="15" fill="#060f20" />
            <rect x="58" y="895" width="138" height="358" fill="#0e0204" />
            <rect x="58" y="909" width="138" height="254" fill="#24060b" />
            {#each ticks as p}
              <rect x="58" y={Math.round(y(p)) - 1} width="2393" height="1" fill="#fff" opacity=".06" />
            {/each}

            {#each smallVolumes as v}
              <rect x={v.x} y={1371 - v.h} width={v.w} height={v.h} fill={v.muted ? '#222d3c' : '#0d1f57'} />
            {/each}
            {#each volumes as [vx, vw, vh, muted]}
              <rect x={vx} y={1371 - vh} width={vw} height={vh} fill={muted ? '#222d3c' : '#0d1f57'} />
            {/each}
            <rect x="144" y="1048" width="34" height="323" fill="#5f7a9a" opacity=".37" />
            <polyline points={volumeMa} fill="none" stroke="#38381a" stroke-dasharray="2 2" />
            <path d="M180.500 82V1371" stroke="#6b641c" stroke-dasharray="1 3" />

            <path d="M58 1035.500H2451M58 1341.500H2451" stroke="#00bcd4" stroke-dasharray="5 6" />
            <path d="M58 908h138" stroke="#c77f37" stroke-width="2" />
            <path d="M58 1233h104M162 1163h33" stroke="#0fb5cf" stroke-width="2" />
            <path d="M148 1163.500h30" stroke="#089981" />
            <polyline points={sma} fill="none" stroke="#d8414f" stroke-width="2" shape-rendering="auto" />

            {#each candles as c}
              <g fill={c.up ? '#089981' : '#f23645'}>
                <rect x={c.x} y={c.hi} width="1" height={c.lo - c.hi} />
                <rect x={c.x - Math.floor(c.width / 2)} y={c.t} width={c.width} height={Math.max(1, c.b - c.t)} />
              </g>
            {/each}

            <path d={vwapPath} stroke="#2f62f5" />
            <g shape-rendering="auto">
              {#each dotXs as x}
                <circle cx={x + 0.5} cy="672.500" r="2.500" fill="#a3a7b3" />
                <circle cx={x + 0.5} cy="856.500" r="2.500" fill="#078a94" />
              {/each}
              {#each prevXs as x}
                <circle cx={x + 0.5} cy="404" r="2.500" fill="#0fa3ab" />
                <circle cx={x + 0.5} cy="1140.500" r="2.500" fill="#b09aa2" />
              {/each}
            </g>

            <path d="M180 323.500H2256" stroke="#9c9650" stroke-dasharray="5 6" />
            <path d="M54 384H2443" stroke="#7d7f83" stroke-width="2" stroke-dasharray="10 12" />
            <path d="M195 441H1465" stroke="#ff9800" stroke-width="2" />
            <g fill="#ff9800" fill-opacity=".18" stroke="#ff9800">
              <rect x="383.500" y="358.500" width="892" height="4" />
              <rect x="873.500" y="265.500" width="338" height="2" />
              <rect x="873.500" y="297.500" width="465" height="3" />
            </g>

            <g fill="#ffeb3b" fill-opacity=".25">
              <rect x="1258" y="254" width="42" height="42" />
              <rect x="1275" y="250" width="13" height="46" />
              <rect x="1327" y="273" width="157" height="39" />
            </g>
            <g fill="#00bcd4" fill-opacity=".24">
              <rect x="1258" y="296" width="42" height="373" />
              <rect x="1327" y="312" width="157" height="357" />
              <rect x="1330" y="312" width="154" height="70" />
            </g>
            <path d="M1327 273.500h157M1258 254.500h42" stroke="#6e6417" />
            <path d="M1330 312 1484 382M1275 296l13-46" stroke="#4c6468" stroke-dasharray="5 5" opacity=".6" />

            <rect x="1438" y="691" width="544" height="16" fill="#202020" />
            <text x="1441" y="703" class="note-text">\32000</text>
            <path d="M58 1163.500H2451" stroke="#fbc02d" stroke-width="3" stroke-dasharray="3 9" stroke-dashoffset="2" />
            <text x="190" y="909" fill="#d48a3c" class="tiny">op</text>
            <text x="185" y="1163" fill="#12b5cf" class="tiny">1530</text>
            <text x="151" y="1231" fill="#12b5cf" class="tiny">1530</text>
            <path d="M1533.500 82V1371M58 740.500H2430" stroke="#8296a6" stroke-dasharray="5 6" opacity=".85" />
            <g transform="translate(68 1342)" fill="#dbdbdb" shape-rendering="auto">
              <path d="M0 0h12v15H6V6H0z" />
              <circle cx="17" cy="3" r="3" />
              <path d="M22 0h8l-6 15h-7z" />
            </g>
          </svg>

          <div class="legend">
            <div class="title">
              {@render logo('toyota')}
              <h1>トヨタ自動車 · 15秒 · TSE</h1>
              <svg class="flag" viewBox="0 0 12 12"><path d="M0 0h12L9 6l3 6H0z" fill="#ffb92e" /></svg>
              <span class="status"></span>
              <span class="volume">出来高<b>22.7K</b></span>
            </div>
            <div class="subrow">
              <button class="count">{@render icon('chev')}9</button>
              <svg class="sync" viewBox="0 0 18 18"><circle cx="9" cy="9" r="9" fill="#2c1c44" /><path d="M4 8a5 5 0 0 1 9.500-1M14 10a5 5 0 0 1-9.500 1M14 4v3h-3M4 14v-3h3" fill="none" stroke="#a678f0" stroke-width="1.500" /></svg>
            </div>
          </div>

          <table class="gap-table">
            <tbody><tr><th>Daily Gap</th><td>2.14%</td></tr></tbody>
          </table>

          {#each lineTags as tag}
            <span class="tag line {tag.tone}" style="top:{topPct(tag.at)}">{tag.text}</span>
          {/each}
          <button class="add-alert" style="top:{topPct(740)}" aria-label="アラートを追加">
            <svg viewBox="0 0 16 16"><circle cx="8" cy="8" r="7" /><path d="M8 5v6M5 8h6" /></svg>
          </button>
        </div>

        <div class="prices">
          {#each ticks as p}
            <span class="price" style="top:{topPct(y(p) - 1)}">{tickText(p)}</span>
          {/each}
          {#each priceTags as tag}
            <span class="tag {tag.tone}" style="top:{topPct(tag.at)}">{tag.text}</span>
          {/each}
        </div>

        <div class="times">
          {#each times as [x, label]}
            <span class="time" style="left:{leftPct(x)}">{label}</span>
          {/each}
          <span class="time cursor" style="left:{leftPct(1533)}">5月 25 (月)&ensp; 10:07:00</span>
        </div>
        <button class="corner" aria-label="スケール設定">{@render icon('hex')}</button>
      </section>

      <footer>
        <div class="ranges">
          {#each ranges as range}<button>{range}</button>{/each}
        </div>
        <span class="sep"></span>
        <button class="tool goto" aria-label="日付へ移動">{@render icon('goto')}</button>
        <div class="drawbar">
          <span class="grip"></span>
          {#each drawTools as name}
            <button class="draw" aria-label={name}>{@render icon(name)}</button>
          {/each}
        </div>
        <div class="clock">
          <button>10:55:09 UTC+9</button>
          <span class="sep"></span>
          <button>配当調整</button>
          <button class="collapse" aria-label="折りたたむ">{@render icon('collapse')}</button>
        </div>
      </footer>
    </main>

    <aside class="rightbar">
      {#each rightTop as name}
        <button class="side" aria-label={name}>
          {@render icon(name)}
          {#if name === 'clock'}<span class="badge">99+</span>{/if}
        </button>
      {/each}
      <div class="lower">
        {#each rightBottom as name}
          <button class="side" aria-label={name}>{@render icon(name)}</button>
        {/each}
        <button class="side" aria-label="products">
          <svg class="products" viewBox="0 0 34 34">
            <circle cx="17" cy="17" r="17" />
            {#each [8, 15, 22] as gx}{#each [8, 15, 22] as gy}<rect x={gx} y={gy} width="4" height="4" rx="1" />{/each}{/each}
          </svg>
        </button>
        <hr />
        <button class="side" aria-label="help">{@render icon('help')}</button>
      </div>
    </aside>
  </div>
  <div class="strip"></div>
</div>

<style>
  :global(body) {
    margin: 0;
    background: #2e2e2e;
  }
  .app {
    display: flex;
    flex-direction: column;
    height: 100vh;
    overflow: hidden;
    background: #2e2e2e;
    color: #dbdbdb;
    font-family: 'Open Sans', 'Noto Sans CJK JP', sans-serif;
    font-size: 14px;
  }
  button {
    display: flex;
    align-items: center;
    justify-content: center;
    flex: none;
    border: none;
    background: none;
    padding: 0;
    color: inherit;
    font: inherit;
    white-space: nowrap;
    cursor: pointer;
  }
  .icon {
    width: 28px;
    height: 28px;
    flex: none;
    fill: none;
    stroke: currentColor;
  }
  .icon :global(text) {
    font: 9px 'Open Sans', sans-serif;
    fill: currentColor;
    stroke: none;
    text-anchor: middle;
  }
  .logo {
    width: 18px;
    height: 18px;
    flex: none;
  }
  hr {
    width: 36px;
    height: 1px;
    margin: 6px auto;
    border: none;
    background: #4a4a4a;
  }
  .sep {
    width: 1px;
    height: 22px;
    flex: none;
    background: #4a4a4a;
  }
  .badge {
    position: absolute;
    top: -2px;
    right: -8px;
    min-width: 10px;
    padding: 0 4px;
    border-radius: 8px;
    background: #f23645;
    color: #fff;
    font-size: 11px;
    font-weight: 600;
    line-height: 16px;
    text-align: center;
  }

  .tabs {
    display: flex;
    height: 35px;
    flex: none;
    background: #3d3d3d;
  }
  .tab {
    position: relative;
    display: flex;
    align-items: center;
    flex: 0 1 159px;
    min-width: 0;
    padding-left: 12px;
    box-sizing: border-box;
  }
  .tab::after {
    content: '';
    position: absolute;
    right: 0;
    top: 7px;
    width: 1px;
    height: 22px;
    background: #575757;
  }
  .tab.bare::after {
    display: none;
  }
  .tab.active {
    background: #0f0f0f;
  }
  .quote {
    display: flex;
    align-items: center;
    width: 134px;
    overflow: hidden;
    color: inherit;
    text-decoration: none;
    mask-image: linear-gradient(to right, #000 106px, transparent 144px);
  }
  .active .quote {
    mask-image: none;
  }
  .quote.short {
    width: 124px;
    mask-image: linear-gradient(to right, #000 96px, transparent 132px);
  }
  .code {
    margin-left: 4px;
    font-weight: 500;
  }
  .arrow {
    flex: none;
    margin: 0 5px;
    border: 5px solid transparent;
    border-top: none;
    border-bottom: 9px solid #089981;
  }
  .arrow.down {
    border-top: 9px solid #f23645;
    border-bottom: none;
  }
  .pct {
    color: #089981;
    font-size: 13px;
    font-weight: 500;
  }
  .pct.down {
    color: #f23645;
  }
  .close svg {
    width: 11px;
    height: 11px;
    stroke: #dbdbdb;
    margin-left: 3px;
  }
  .mark {
    position: absolute;
    left: 12px;
    right: 12px;
    bottom: 0;
    height: 3px;
  }
  .win {
    width: 50px;
  }
  .win.add {
    width: 34px;
  }
  .win.dim {
    color: #8c8c8c;
  }
  .win.monitor {
    width: 48px;
    border-right: 1px solid #575757;
    height: 22px;
  }
  .win svg {
    height: 16px;
    fill: none;
    stroke: currentColor;
  }
  .win.more svg {
    height: 14px;
    stroke-width: 2;
  }
  .window-tools {
    display: flex;
    align-items: center;
    margin-left: auto;
  }

  .toolbar {
    display: flex;
    align-items: center;
    height: 41px;
    flex: none;
    margin-bottom: 4px;
    padding: 2px 5px 0 12px;
    background: #0f0f0f;
    box-sizing: border-box;
  }
  .avatar {
    position: relative;
  }
  .avatar svg {
    width: 28px;
    height: 28px;
  }
  .search {
    display: flex;
    align-items: center;
    width: 126px;
    height: 28px;
    margin: 0 9px 0 17px;
    padding: 0 2px 0 12px;
    border-radius: 14px;
    background: #3d3d3d;
    box-sizing: border-box;
  }
  .search input {
    flex: 1;
    min-width: 0;
    padding: 0;
    border: none;
    outline: none;
    background: none;
    color: #dbdbdb;
    font: 600 14px 'Open Sans', sans-serif;
  }
  .search svg {
    width: 24px;
    height: 24px;
  }
  .tool {
    width: 28px;
    height: 34px;
    border-radius: 6px;
  }
  .tool + .sep {
    margin-left: 8px;
  }
  .toolbar > .sep {
    margin-right: 8px;
  }
  .toolbar > .sep.first {
    margin-right: 6px;
  }
  .frame {
    height: 34px;
    padding: 0 6px 0 5px;
    border-radius: 6px;
  }
  .tool.on,
  .frame.on {
    background: #3d3d3d;
  }
  .tool.on,
  .tool.wide {
    width: 34px;
  }
  .tool.wide {
    margin-right: 4px;
  }
  .tool.chevron {
    width: 24px;
  }
  .tool.chevron + .sep {
    margin-left: 4px;
  }
  .tool.indent {
    margin: 0 5px 0 4px;
  }
  .tool.labelled {
    width: auto;
    gap: 4px;
    padding: 0 6px 0 2px;
  }
  .tool.labelled + .tool.labelled {
    margin-left: 8px;
  }
  .tool.big {
    width: 38px;
  }
  .tool + .faded {
    margin-left: 11px;
    opacity: 0.5;
  }
  .favorites {
    display: flex;
    gap: 6px;
    margin: 0 14px 0 8px;
  }
  .favorites button {
    width: 22px;
    height: 22px;
    border: 1px solid #4a4a4a;
    border-radius: 50%;
    font-size: 10px;
    font-weight: 600;
    box-sizing: border-box;
  }
  .right {
    display: flex;
    align-items: center;
    margin-left: auto;
  }
  .layout-name {
    flex-direction: column;
    margin: 0 4px 0 10px;
    line-height: 16px;
  }
  .layout-name small {
    color: #2962ff;
    font-size: 10px;
    line-height: 10px;
  }
  .initial {
    width: 22px;
    height: 22px;
    margin: 0 14px;
    border-radius: 50%;
    background: #f0f0f0;
    color: #1565c0;
    font-size: 11px;
  }
  .right .tool.chevron + .initial {
    margin-left: 3px;
  }
  .right .sep {
    margin-right: 4px;
  }
  .pill {
    height: 28px;
    margin-left: 5px;
    padding: 0 11px;
    border: 1px solid #4a4a4a;
    border-radius: 14px;
  }
  .pill.solid {
    margin-left: 8px;
    background: #f0f0f0;
    color: #0f0f0f;
  }

  .body {
    display: flex;
    gap: 4px;
    flex: 1;
    min-height: 0;
  }
  .left {
    display: flex;
    flex-direction: column;
    width: 52px;
    flex: none;
    padding: 6px 0 5px;
    background: #0f0f0f;
    border-top-right-radius: 4px;
    box-sizing: border-box;
  }
  .side {
    position: relative;
    width: 34px;
    height: 34px;
    margin: 2px auto;
    border-radius: 6px;
  }
  .left .side .icon {
    width: 28px;
    height: 28px;
  }
  .side.on {
    background: #3d3d3d;
  }
  .side.lit {
    background: #f0f0f0;
    color: #0f0f0f;
  }
  .left .last {
    margin-top: auto;
    margin-bottom: 17px;
  }
  .rightbar {
    display: flex;
    flex-direction: column;
    width: 45px;
    flex: none;
    padding-top: 1px;
    background: #0f0f0f;
    border-top-left-radius: 4px;
    box-sizing: border-box;
  }
  .rightbar .side {
    height: 46px;
    margin: 0 auto;
  }
  .rightbar .badge {
    top: 4px;
    right: -1px;
  }
  .lower {
    margin-top: auto;
    padding-bottom: 2px;
  }
  .lower .side {
    height: 45px;
  }
  .lower hr {
    width: 32px;
    margin: 6px auto;
  }
  .products {
    width: 34px;
    height: 34px;
    fill: #0f0f0f;
  }
  .products circle {
    fill: #f0f0f0;
  }

  main {
    display: flex;
    flex-direction: column;
    gap: 1px;
    flex: 1;
    min-width: 0;
  }
  .chart {
    display: grid;
    grid-template-columns: 1fr 58px;
    grid-template-rows: 1fr 26px;
    flex: 1;
    min-height: 0;
    border: 2px solid #8c8c8c;
    border-radius: 4px;
    background: #000;
    overflow: hidden;
  }
  .plot,
  .prices,
  .times {
    position: relative;
    min-height: 0;
    min-width: 0;
    overflow: hidden;
  }
  .canvas {
    position: absolute;
    inset: 0;
    width: 100%;
    height: 100%;
  }
  .note-text {
    fill: #fff;
    font-size: 12px;
    font-weight: 600;
  }
  .tiny {
    font-size: 9px;
    font-weight: 500;
  }
  .legend {
    position: absolute;
    left: 7px;
    top: 3px;
  }
  .title {
    display: flex;
    align-items: center;
    height: 22px;
  }
  h1 {
    margin: 0 8px 0 5px;
    font-size: 16px;
    font-weight: 400;
    line-height: 22px;
  }
  .flag {
    width: 12px;
    height: 12px;
  }
  .status {
    width: 8px;
    height: 8px;
    margin: 0 8px 0 13px;
    border: 5px solid #0a2a26;
    border-radius: 50%;
    background: #42bda8;
  }
  .volume {
    font-size: 13px;
  }
  .volume b {
    color: #d03442;
    font-weight: 500;
  }
  .subrow {
    display: flex;
    align-items: center;
    gap: 16px;
    margin-top: 5px;
  }
  .count {
    width: 32px;
    height: 21px;
    border: 1px solid #3d3d3d;
    border-radius: 4px;
    font-size: 13px;
    font-weight: 600;
    box-sizing: border-box;
  }
  .count .icon {
    width: 16px;
    stroke-width: 2;
  }
  .sync {
    width: 18px;
    height: 18px;
  }
  .gap-table {
    position: absolute;
    right: 9px;
    top: 8px;
    border-spacing: 1px 0;
    color: #fff;
    font-size: 10px;
    line-height: 19px;
  }
  .gap-table th,
  .gap-table td {
    padding: 0 3px;
    background: #1e1f22;
    font-weight: 600;
  }
  .gap-table td {
    background: #2e6b30;
  }

  .prices {
    border-left: 1px solid #8c8c8c;
    margin-left: -1px;
    font-size: 12px;
    font-weight: 500;
  }
  .price {
    position: absolute;
    left: 9px;
    line-height: 16px;
    transform: translateY(-50%);
  }
  .tag {
    position: absolute;
    left: 0;
    padding: 0 4px 0 9px;
    border-radius: 0 2px 2px 0;
    color: #fff;
    font-size: 12px;
    font-weight: 500;
    line-height: 17px;
    white-space: pre;
    transform: translateY(-50%);
  }
  .tag.line {
    left: auto;
    right: 1px;
    padding: 0 3px;
    border-radius: 2px 0 0 2px;
  }
  .yellow {
    background: #ffeb3b;
    color: #0f0f0f;
  }
  .green {
    background: #4caf50;
  }
  .gray {
    background: #5d5d5d;
  }
  .steel {
    background: #787b86;
  }
  .blue {
    background: #2962ff;
  }
  .pink {
    background: #e91e63;
  }
  .cyan {
    background: #00bcd4;
    color: #0f0f0f;
  }
  .white {
    background: #fff;
    color: #0f0f0f;
  }
  .red {
    background: #f7525f;
  }
  .amber {
    background: #fbc02d;
    color: #0f0f0f;
  }
  .slate {
    background: #363a45;
    line-height: 21px;
  }
  .tall {
    padding-bottom: 4px;
  }
  .tag.note {
    right: 3px;
    color: #1e88e5;
    font-size: 10px;
  }
  .add-alert {
    position: absolute;
    right: 1px;
    width: 21px;
    height: 21px;
    border-radius: 2px 0 0 2px;
    background: #363a45;
    transform: translateY(-50%);
  }
  .add-alert svg {
    width: 18px;
    height: 18px;
    fill: none;
    stroke: #fff;
  }
  .times {
    border-top: 1px solid #8c8c8c;
    font-size: 12px;
    font-weight: 500;
    line-height: 26px;
  }
  .time {
    position: absolute;
    top: 0;
    white-space: pre;
    transform: translateX(-50%);
  }
  .cursor {
    padding: 0 8px;
    border-radius: 0 0 2px 2px;
    background: #363a45;
    color: #fff;
    line-height: 23px;
  }
  .corner {
    margin-left: -1px;
    border-top: 1px solid #8c8c8c;
    border-left: 1px solid #8c8c8c;
  }
  .corner .icon {
    width: 18px;
    height: 18px;
    stroke-width: 2;
  }

  footer {
    display: flex;
    align-items: center;
    height: 38px;
    flex: none;
    border-radius: 4px;
    background: #0f0f0f;
  }
  .ranges {
    display: flex;
    gap: 12px;
    padding: 0 10px 0 14px;
  }
  .goto {
    margin: 0 18px 0 6px;
  }
  .drawbar {
    display: flex;
    align-items: center;
    height: 38px;
    padding: 0 0 0 9px;
    border-radius: 6px;
    background: #1f1f1f;
  }
  .grip {
    width: 8px;
    height: 15px;
    margin-right: 8px;
    background: radial-gradient(circle, #575757 1px, transparent 1px) 0 0 / 4px 5px;
  }
  .draw {
    width: 38px;
    height: 34px;
  }
  .draw .icon {
    width: 28px;
    height: 28px;
  }
  .clock {
    display: flex;
    align-items: center;
    gap: 9px;
    margin-left: auto;
    padding-right: 6px;
  }
  .clock .collapse {
    width: 34px;
    height: 34px;
    border-radius: 6px;
    background: #3d3d3d;
  }
  .strip {
    height: 2px;
    flex: none;
    background: #2e2e2e;
  }
</style>
